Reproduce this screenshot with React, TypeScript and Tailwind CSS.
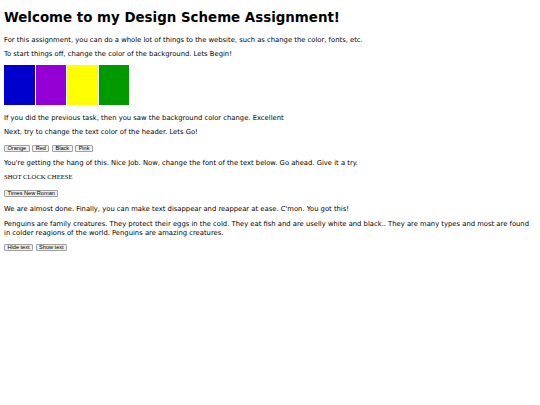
import React from "react";

const btn =
  "h-[7px] px-[2.5px] border border-[#a0a0a0] rounded-[1px] bg-[#efefef] text-[5.6px] leading-[5px] text-black [font-family:'Liberation_Sans',Arial,sans-serif]";

const p = "text-[6.8px] leading-[9px]";

export default function App() {
  return (
    <div className="w-[540px] h-[405px] bg-white text-black px-[4px] [font-family:'DejaVu_Sans',Verdana,sans-serif] overflow-hidden">
      <h1 className="pt-[9.5px] text-[13.4px] leading-[16px] font-bold">Welcome to my Design Scheme Assignment!</h1>
      <p className={`mt-[10px] ${p}`}>
        For this assignment, you can do a whole lot of things to the website, such as change the color, fonts, etc.
      </p>
      <p className={`mt-[5px] ${p}`}>To start things off, change the color of the background. Lets Begin!</p>
      <div className="mt-[6.5px] flex gap-[1px]">
        <div className="w-[31px] h-[40px] bg-[#0000cc]" />
        <div className="w-[30px] h-[40px] bg-[#9400d3]" />
        <div className="w-[31px] h-[40px] bg-[#ffff00]" />
        <div className="w-[30px] h-[40px] bg-[#009900]" />
      </div>
      <p className={`mt-[8.5px] ${p}`}>
        If you did the previous task, then you saw the background color change. Excellent
      </p>
      <p className={`mt-[5px] ${p}`}>Next, try to change the text color of the header. Lets Go!</p>
      <div className="mt-[8px] flex gap-[2.5px]">
        <button className={btn}>Orange</button>
        <button className={btn}>Red</button>
        <button className={btn}>Black</button>
        <button className={btn}>Pink</button>
      </div>
      <p className={`mt-[7.5px] ${p}`}>
        You're getting the hang of this. Nice Job. Now, change the font of the text below. Go ahead. Give it a try.
      </p>
      <p className="mt-[5px] text-[6.7px] leading-[8px] [font-family:'Liberation_Serif','Times_New_Roman',serif]">
        SHOT CLOCK CHEESE
      </p>
      <div className="mt-[8.5px] flex">
        <button className={btn}>Times New Roman</button>
      </div>
      <p className={`mt-[8.5px] ${p}`}>
        We are almost done. Finally, you can make text disappear and reappear at ease. C'mon. You got this!
      </p>
      <p className={`mt-[5.5px] ${p}`}>
        Penguins are family creatures. They protect their eggs in the cold. They eat fish and are uselly white and
        black.. They are many types and most are found in colder reagions of the world. Penguins are amazing creatures.
      </p>
      <div className="mt-[6px] flex gap-[2.5px]">
        <button className={btn}>Hide text</button>
        <button className={btn}>Show text</button>
      </div>
    </div>
  );
}
